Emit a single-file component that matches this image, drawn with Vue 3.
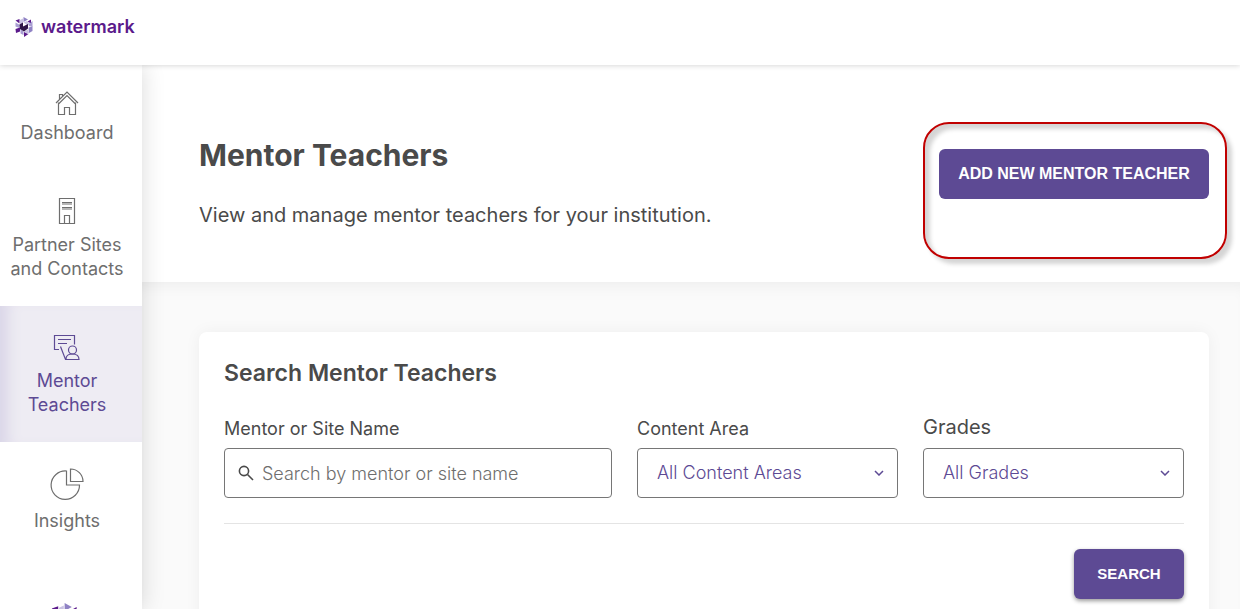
<script setup>
import { ref } from 'vue'

const query = ref('')
const area = ref('all')
const grade = ref('all')
</script>

<template>
  <div class="app">
    <header class="topbar">
      <a class="brand" href="#" aria-label="watermark home">
        <svg class="mark" viewBox="0 0 40 40" aria-hidden="true">
          <g id="gem">
            <path fill="#8f82c4" d="M17 0l9 5-9 5z" />
            <path fill="#5b1a8b" d="M1 7l8-3v9z" />
            <path fill="#c9c2e3" d="M10 6l6-3v9l-6 4z" />
            <path fill="#5b1a8b" d="M25 9l7-4v8z" />
            <path fill="#c9c2e3" d="M17 11l7-3 7 6-5 3z" />
            <path fill="#a89dd2" d="M28 14l7-6v12l-7-2z" />
            <path fill="#a89dd2" d="M1 11l9 5-1 6-8-3z" />
            <path fill="#5b1a8b" d="M1 24l9-3v8l-8 3z" />
            <path fill="#a89dd2" d="M11 24l6 5v7l-6-3z" />
            <path fill="#5b1a8b" d="M18 30l9 4-9 6z" />
            <path fill="#c9c2e3" d="M18 29l8-4 2 7-3 2z" />
            <path fill="#8f82c4" d="M27 21l8-2v9l-7 4z" />
            <path fill="#2e1547" d="M9 15l7-4v8l10-5v9l-8 6-8-5z" />
          </g>
        </svg>
        <span class="wordmark">watermark</span>
      </a>
    </header>

    <div class="body">
      <nav class="sidebar" aria-label="Main">
        <a class="item dashboard" href="#">
          <svg width="24" height="24" viewBox="0 0 24 24" aria-hidden="true">
            <path d="M1 12L12 1l11 11M3.500 11.500v12h6v-7h5v7h6V11.500M3.500 13L12 4.500 20.500 13M4.500 8V3.500h3v2" />
          </svg>
          <span>Dashboard</span>
        </a>
        <a class="item sites" href="#">
          <svg width="18" height="28" viewBox="0 0 18 28" aria-hidden="true">
            <path d="M1.500 1.500h15v25h-15zM6.500 26.500v-8h5v8M4 5.500h10M4 7h10M4 10.500h10M4 12h10" />
          </svg>
          <span>Partner Sites and Contacts</span>
        </a>
        <a class="item mentors active" href="#" aria-current="page">
          <svg width="28" height="28" viewBox="0 0 28 28" aria-hidden="true">
            <path d="M6 16.500H1.500v-14h20v9M5 6.500h13M5 10.500h9M7.500 13.500l5 13h13.500c0-4-2.500-5.500-6.500-5.500s-6.500 1.500-6.500 5" />
            <circle cx="19.500" cy="17" r="4" />
          </svg>
          <span>Mentor Teachers</span>
        </a>
        <a class="item insights" href="#">
          <svg width="34" height="34" viewBox="0 0 34 34" aria-hidden="true">
            <path d="M16.500 4A14.200 14.200 0 1 0 29.500 18H16.500zM20.500 2v12.500h12.500A12.500 12.500 0 0 0 20.500 2z" />
          </svg>
          <span>Insights</span>
        </a>
        <a class="item more" href="#" aria-label="watermark">
          <svg class="mark large" viewBox="0 0 40 40" aria-hidden="true"><use href="#gem" /></svg>
        </a>
      </nav>

      <main class="content">
        <section class="hero">
          <div>
            <h1>Mentor Teachers</h1>
            <p>View and manage mentor teachers for your institution.</p>
          </div>
          <div class="callout">
            <button class="primary add" type="button">ADD NEW MENTOR TEACHER</button>
          </div>
        </section>

        <div class="panel">
          <form class="card" @submit.prevent>
            <h2>Search Mentor Teachers</h2>
            <div class="fields">
              <div class="field wide">
                <label for="query">Mentor or Site Name</label>
                <div class="control">
                  <svg class="lens" width="16" height="16" viewBox="0 0 16 16" aria-hidden="true">
                    <circle cx="6" cy="6" r="4.600" /><path d="M9.500 9.500l5.500 5.500" />
                  </svg>
                  <input id="query" v-model="query" type="text" placeholder="Search by mentor or site name" />
                </div>
              </div>
              <div class="field">
                <label for="area">Content Area</label>
                <div class="control">
                  <select id="area" v-model="area"><option value="all">All Content Areas</option></select>
                  <svg class="chevron" width="10" height="6" viewBox="0 0 10 6" aria-hidden="true"><path d="M1 1l4 4 4-4" /></svg>
                </div>
              </div>
              <div class="field">
                <label class="big" for="grade">Grades</label>
                <div class="control">
                  <select id="grade" v-model="grade"><option value="all">All Grades</option></select>
                  <svg class="chevron" width="10" height="6" viewBox="0 0 10 6" aria-hidden="true"><path d="M1 1l4 4 4-4" /></svg>
                </div>
              </div>
            </div>
            <div class="actions">
              <button class="primary search" type="submit">SEARCH</button>
            </div>
          </form>
        </div>
      </main>
    </div>
  </div>
</template>

<style>
body { overflow: hidden; }
</style>

<style scoped>
* { box-sizing: border-box; }
.app {
  height: 100vh;
  display: flex;
  flex-direction: column;
  overflow: hidden;
  font-family: Inter, "Liberation Sans", sans-serif;
  color: #4a4a4a;
  background: #fafafa;
}
.topbar {
  height: 65px;
  flex: none;
  padding: 16px 15px;
  background: #fff;
  box-shadow: 0 0 6px rgba(0, 0, 0, 0.2);
  position: relative;
  z-index: 2;
}
.brand { display: inline-flex; align-items: center; gap: 6px; color: #5b1a8b; text-decoration: none; }
.mark { width: 20px; height: 20px; }
.mark.large { width: 32px; height: 32px; }
.wordmark { font: 600 18px/22px Inter, sans-serif; }
.body { flex: 1; display: flex; min-height: 0; }
.sidebar {
  width: 142px;
  flex: none;
  background: #fff;
  box-shadow: 0 0 22px rgba(0, 0, 0, 0.15);
  position: relative;
  z-index: 1;
}
.item {
  display: flex;
  flex-direction: column;
  align-items: center;
  padding: 0 8px;
  font-size: 18px;
  line-height: 24px;
  text-align: center;
  color: #6e6e6e;
  text-decoration: none;
}
.item span { margin-right: 8px; }
.item svg { margin-right: 8px; fill: none; stroke: currentColor; stroke-width: 1.2; }
.item .mark { stroke: none; }
.dashboard { padding-top: 26px; gap: 6px; }
.sites { padding: 52px 0 25px; gap: 8px; }
.mentors { padding: 27px 16px 25px; gap: 8px; height: 136px; }
.active { color: #5d4a94; background: #eeecf3; box-shadow: inset 16px 0 14px -8px #dad6e8; }
.insights { padding-top: 25px; gap: 8px; }
.more { padding-top: 70px; }
.content { flex: 1; min-width: 0; }
.hero {
  height: 217px;
  display: flex;
  justify-content: space-between;
  padding: 0 13px 0 57px;
  background: #fff;
}
h1 { margin: 70px 0 0; font-size: 30px; line-height: 40px; font-weight: 700; }
.hero p { margin: 26px 0 0; font-size: 20px; line-height: 28px; font-weight: 400; }
.callout {
  width: 304px;
  height: 137px;
  margin-top: 57px;
  padding: 25px 16px 25px 14px;
  border: 2px solid #c00000;
  border-radius: 26px;
  box-shadow: 5px 5px 4px rgba(0, 0, 0, 0.17), inset 5px 5px 4px rgba(0, 0, 0, 0.17);
}
.primary {
  height: 50px;
  border: 0;
  border-radius: 6px;
  color: #fff;
  background: #5d4a94;
  font: 700 16px/20px "Liberation Sans", sans-serif;
}
.add { width: 100%; padding: 0; }
.panel { padding: 50px 31px 0 57px; box-shadow: inset 0 12px 14px -8px rgba(0, 0, 0, 0.05); }
.card {
  padding: 25px 25px 32px;
  border-radius: 8px;
  background: #fff;
  box-shadow: 0 0 16px rgba(0, 0, 0, 0.05);
}
h2 { margin: 0; font-size: 23px; line-height: 32px; font-weight: 600; }
.fields {
  display: flex;
  gap: 25px;
  margin-top: 24px;
  padding-bottom: 25px;
  border-bottom: 1px solid #e4e4e4;
}
.field { flex: 261; min-width: 0; }
.wide { flex: 388; }
label { display: block; height: 35px; font-size: 18px; line-height: 32px; }
.big { font-size: 20px; line-height: 28px; }
.control {
  display: flex;
  align-items: center;
  height: 50px;
  border: 1px solid #767676;
  border-radius: 4px;
}
input, select {
  flex: 1;
  min-width: 0;
  height: 100%;
  border: 0;
  background: none;
  outline: 0;
  font: 300 18px/24px Inter, sans-serif;
}
input { padding: 0 8px; color: #4a4a4a; }
input::placeholder { color: #6e6e6e; opacity: 1; }
select { appearance: none; padding: 0 19px; color: #5d4a94; }
.lens { margin-left: 13px; fill: none; stroke: #4a4a4a; stroke-width: 1.6; }
.chevron { margin-right: 13px; fill: none; stroke: #5d4a94; stroke-width: 1.5; }
.actions { display: flex; justify-content: flex-end; margin-top: 25px; }
.search { width: 110px; font-size: 15px; box-shadow: 0 2px 4px rgba(0, 0, 0, 0.4); }
</style>
